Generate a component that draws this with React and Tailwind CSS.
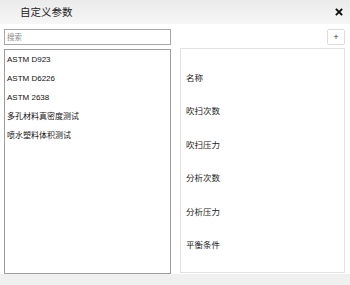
export default function App() {
    const methods = ["ASTM D923", "ASTM D6226", "ASTM 2638", "多孔材料真密度测试", "喷水塑料体积测试"];
    const fields = ["名称", "吹扫次数", "吹扫压力", "分析次数", "分析压力", "平衡条件"];

    return (
        <div className="w-[350px] h-[285px] flex flex-col bg-white text-[#111] font-['Noto_Sans_CJK_SC','Noto_Sans',sans-serif] overflow-hidden">
            <div className="h-[25px] flex items-center justify-between pl-[20px] pr-[7px] bg-gradient-to-b from-[#ebebeb] to-[#f6f6f6]">
                <span className="text-[10.5px] leading-none text-[#222]">自定义参数</span>
                <svg width="8" height="8" viewBox="0 0 8 8">
                    <path d="M1.5 1.5 L6.5 6.5 M6.5 1.5 L1.5 6.5" stroke="#111" strokeWidth="1.8" strokeLinecap="square" />
                </svg>
            </div>

            <div className="flex-1 flex flex-col pl-[4px] pr-[5px] pt-[4px]">
                <div className="flex items-center justify-between h-[17px]">
                    <input
                        placeholder="搜索"
                        className="w-[167px] h-[16px] border border-[#a8a8a8] px-[2px] text-[7.5px] outline-none placeholder:text-[#8a8a8a]"
                    />
                    <button className="w-[18px] h-[16px] border border-[#dcdcdc] rounded-[2px] bg-white flex items-center justify-center text-[9px] leading-none text-[#333]">
                        +
                    </button>
                </div>

                <div className="flex gap-[9px] mt-[3px]">
                    <div className="w-[167px] h-[225px] mt-[1px] border border-[#9d9d9d] flex flex-col">
                        {methods.map(m => (
                            <div key={m} className="h-[19px] flex items-center pl-[2px] text-[8px] font-['Liberation_Sans','Noto_Sans_CJK_SC',sans-serif]">
                                {m}
                            </div>
                        ))}
                    </div>
                    <div className="flex-1 h-[225px] border border-[#e2e2e2] flex flex-col pt-[11px]">
                        {fields.map(f => (
                            <div key={f} className="h-[33.5px] flex items-center pl-[5px] text-[8.5px] text-[#222]">
                                {f}
                            </div>
                        ))}
                    </div>
                </div>
            </div>

            <div className="h-[11px] bg-[#f0f0f0]"></div>
        </div>
    );
}
